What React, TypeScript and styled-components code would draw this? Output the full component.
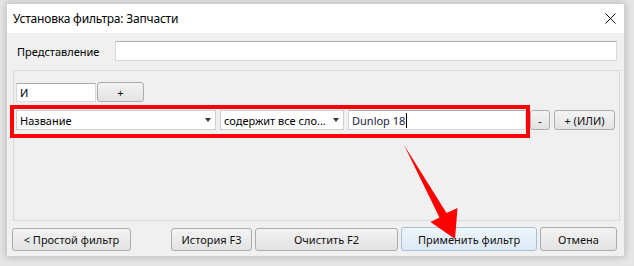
import React from "react";
import styled, { createGlobalStyle } from "styled-components";

const Global = createGlobalStyle`
  html, body { margin: 0; padding: 0; }
  body {
    background: #e6e6e6;
    font-family: "Noto Sans", "Open Sans", sans-serif;
    font-size: 11px;
    color: #000;
  }
`;

const Page = styled.div`
  position: relative;
  width: 634px;
  height: 266px;
  padding: 3px 0 0 6px;
  box-sizing: border-box;
  overflow: hidden;
`;

const Window = styled.div`
  width: 619px;
  height: 254px;
  background: #f0f0f0;
  border: 1px solid #cfcfcf;
  box-sizing: border-box;
  box-shadow: 0 0 7px rgba(0, 0, 0, 0.22);
  display: flex;
  flex-direction: column;
`;

const TitleBar = styled.div`
  height: 29px;
  background: #fff;
  display: flex;
  align-items: center;
  justify-content: space-between;
  padding: 0 8px 0 6px;
  flex-shrink: 0;
`;

const Title = styled.span`
  font-size: 12px;
  letter-spacing: -0.2px;
  color: #000;
`;

const CloseIcon = styled.svg`
  width: 11px;
  height: 11px;
  display: block;
`;

const Body = styled.div`
  flex: 1;
  display: flex;
  flex-direction: column;
  padding: 8px 7px 6px 5px;
`;

const ViewRow = styled.div`
  display: flex;
  align-items: center;
  height: 20px;
`;

const Label = styled.span`
  width: 103px;
  padding-left: 5px;
  box-sizing: border-box;
  font-size: 11px;
`;

const TextField = styled.div<{ $w?: number; $h?: number }>`
  ${(p) => (p.$w ? `width: ${p.$w}px;` : "flex: 1;")}
  height: ${(p) => p.$h ?? 20}px;
  box-sizing: border-box;
  background: #fff;
  border: 1px solid #d5d9de;
  border-top-color: #abadb3;
  display: flex;
  align-items: center;
  padding-left: 3px;
  font-size: 11px;
  color: #000;
  flex-shrink: 0;
`;

const GroupBox = styled.div`
  margin-top: 9px;
  margin-left: 1px;
  margin-right: -3px;
  height: 151px;
  box-sizing: border-box;
  border: 1px solid #d9d9d9;
  padding: 11px 0 0 2px;
  display: flex;
  flex-direction: column;
  gap: 8px;
`;

const Row = styled.div<{ $gap: number }>`
  display: flex;
  align-items: center;
  gap: ${(p) => p.$gap}px;
  height: 20px;
`;

const Button = styled.button<{ $w: number; $h?: number; $primary?: boolean }>`
  width: ${(p) => p.$w}px;
  height: ${(p) => p.$h ?? 20}px;
  box-sizing: border-box;
  flex-shrink: 0;
  padding: 0;
  border-radius: 3px;
  border: 1px solid ${(p) => (p.$primary ? "#a9bfd6" : "#acacac")};
  background: ${(p) =>
    p.$primary
      ? "linear-gradient(#eef5fd, #dde9f8)"
      : "linear-gradient(#f3f3f3, #e3e3e3)"};
  font-family: "Noto Sans", "Open Sans", sans-serif;
  font-size: 11px;
  color: #111;
  display: flex;
  align-items: center;
  justify-content: center;
`;

const Select = styled.div<{ $w: number }>`
  width: ${(p) => p.$w}px;
  height: 20px;
  box-sizing: border-box;
  flex-shrink: 0;
  background: #fff;
  border: 1px solid #cdcdcd;
  display: flex;
  align-items: center;
  justify-content: space-between;
  padding: 0 4px 0 3px;
  font-size: 11px;
  white-space: nowrap;
  overflow: hidden;
`;

const Caret = styled.span`
  width: 0;
  height: 0;
  border-left: 3.5px solid transparent;
  border-right: 3.5px solid transparent;
  border-top: 4px solid #333;
  flex-shrink: 0;
`;

const ValueText = styled.span`
  color: #1a1a40;
  display: flex;
  align-items: center;
`;

const TextCursor = styled.span`
  display: inline-block;
  width: 1px;
  height: 15px;
  background: #000;
  margin-left: 1px;
`;

const Footer = styled.div`
  margin-top: 6px;
  display: flex;
  align-items: center;
  gap: 3px;
  height: 24px;
`;

const Spacer = styled.div`
  width: 40px;
`;

const Highlight = styled.div`
  position: absolute;
  left: 10px;
  top: 105px;
  width: 520px;
  height: 33px;
  box-sizing: border-box;
  border: 4px solid #ff0000;
  pointer-events: none;
`;

const ArrowSvg = styled.svg`
  position: absolute;
  left: 0;
  top: 0;
  pointer-events: none;
`;

export default function App() {
  return (
    <>
      <Global />
      <Page>
        <Window>
          <TitleBar>
            <Title>Установка фильтра: Запчасти</Title>
            <CloseIcon viewBox="0 0 11 11">
              <path d="M0.5 0.5 L10.5 10.5 M10.5 0.5 L0.5 10.5" stroke="#111" strokeWidth="1" />
            </CloseIcon>
          </TitleBar>
          <Body>
            <ViewRow>
              <Label>Представление</Label>
              <TextField />
            </ViewRow>
            <GroupBox>
              <Row $gap={1}>
                <TextField $w={80} $h={19}>И</TextField>
                <Button $w={47}>+</Button>
              </Row>
              <Row $gap={4}>
                <Select $w={200}>
                  <span>Название</span>
                  <Caret />
                </Select>
                <Select $w={124}>
                  <span>содержит все сло...</span>
                  <Caret />
                </Select>
                <TextField $w={178}>
                  <ValueText>
                    Dunlop 18
                    <TextCursor />
                  </ValueText>
                </TextField>
                <Button $w={20}>-</Button>
                <Button $w={61}>+ (ИЛИ)</Button>
              </Row>
            </GroupBox>
            <Footer>
              <Button $w={119} $h={23}>&lt; Простой фильтр</Button>
              <Spacer />
              <Button $w={81} $h={23}>История F3</Button>
              <Button $w={143} $h={23}>Очистить F2</Button>
              <Button $w={136} $h={24} $primary>Применить фильтр</Button>
              <Button $w={77} $h={24}>Отмена</Button>
            </Footer>
          </Body>
        </Window>
        <Highlight />
        <ArrowSvg width="634" height="266" viewBox="0 0 634 266">
          <polygon
            points="404,145 446.5,213 457.5,208 455,239 430.5,222 439.5,217.5"
            fill="#ff0000"
          />
        </ArrowSvg>
      </Page>
    </>
  );
}
